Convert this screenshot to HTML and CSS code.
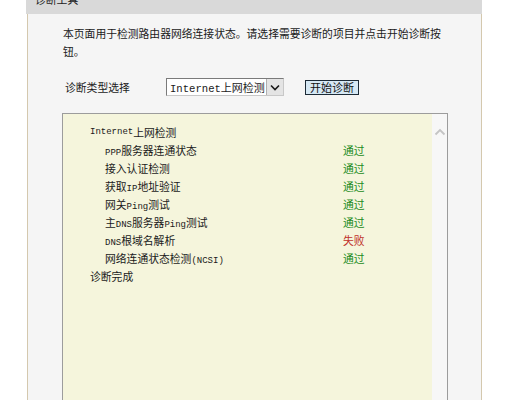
FILE: index.html
```html
<!DOCTYPE html>
<html>
<head>
<meta charset="utf-8">
<link rel="stylesheet" href="styles.css">
</head>
<body>
<div class="panel">
  <div class="header">诊断工具</div>
  <div class="body">
    <p class="desc">本页面用于检测路由器网络连接状态。请选择需要诊断的项目并点击开始诊断按钮。</p>
    <div class="row">
      <span class="label">诊断类型选择</span>
      <div class="select">
        <span class="select-text"><span class="en">Internet</span>上网检测</span>
        <span class="select-btn">
          <svg width="10" height="7" viewBox="0 0 10 7"><path d="M1 1.5 L5 5.5 L9 1.5" fill="none" stroke="#1a1a1a" stroke-width="1.6"/></svg>
        </span>
      </div>
      <span class="button">开始诊断</span>
    </div>
    <div class="textarea">
      <div class="log">
        <div class="line"><span class="en">Internet</span>上网检测</div>
        <div class="line sub"><span class="item"><span class="en">PPP</span>服务器连通状态</span><span class="ok">通过</span></div>
        <div class="line sub"><span class="item">接入认证检测</span><span class="ok">通过</span></div>
        <div class="line sub"><span class="item">获取<span class="en">IP</span>地址验证</span><span class="ok">通过</span></div>
        <div class="line sub"><span class="item">网关<span class="en">Ping</span>测试</span><span class="ok">通过</span></div>
        <div class="line sub"><span class="item">主<span class="en">DNS</span>服务器<span class="en">Ping</span>测试</span><span class="ok">通过</span></div>
        <div class="line sub"><span class="item"><span class="en">DNS</span>根域名解析</span><span class="fail">失败</span></div>
        <div class="line sub"><span class="item">网络连通状态检测<span class="en">(NCSI)</span></span><span class="ok">通过</span></div>
        <div class="line">诊断完成</div>
      </div>
      <div class="scrollbar">
        <svg width="12" height="8" viewBox="0 0 12 8"><path d="M1.5 6.5 L6 2 L10.5 6.5" fill="none" stroke="#c4c4c4" stroke-width="1.8"/></svg>
      </div>
    </div>
  </div>
</div>
</body>
</html>
```
FILE: styles.css
```css
html, body {
  margin: 0;
  padding: 0;
  background: #ffffff;
  overflow: hidden;
}
body {
  font-family: "Noto Sans CJK SC", "Liberation Sans", sans-serif;
  font-size: 10.8px;
  color: #1a1a1a;
}
.panel {
  margin-left: 26px;
  margin-top: -10px;
  width: 456px;
}
.header {
  height: 24px;
  line-height: 18px;
  background: #d9d9d9;
  padding-left: 9px;
  color: #222;
}
.body {
  background: #f5f5f5;
  border-left: 1px solid #d4c8ae;
  border-right: 1px solid #d4c8ae;
  margin-left: 1px;
  padding: 10px 0 0 34px;
  height: 420px;
}
.desc {
  margin: 0 0 0 1px;
  width: 386px;
  line-height: 18px;
}
.row {
  display: flex;
  align-items: center;
  margin-top: 18px;
  height: 18px;
}
.label {
  margin-left: 3px;
  width: 101px;
}
.select {
  width: 116px;
  height: 16px;
  border: 1px solid #7a7a7a;
  border-right-color: #c8c8c8;
  border-bottom-color: #c8c8c8;
  background: #fff;
  display: flex;
  align-items: stretch;
}
.select-text {
  flex: 1;
  padding-left: 3px;
  line-height: 16px;
  font-size: 11px;
}
.select .en {
  font-size: 10.6px;
}
.select-btn {
  width: 16px;
  border-left: 1px solid #b0b0b0;
  background: #e4e4e4;
  display: flex;
  align-items: center;
  justify-content: center;
}
.button {
  margin-left: 21px;
  width: 52px;
  height: 13px;
  line-height: 13px;
  border: 1px solid #1c2a36;
  background: #d6e8f4;
  text-align: center;
  font-size: 11px;
  color: #111;
}
.en {
  font-family: "Liberation Mono", "DejaVu Sans Mono", monospace;
  font-size: 9px;
}
.textarea {
  margin-top: 17px;
  width: 384px;
  height: 320px;
  border: 1px solid #9c9c9c;
  box-shadow: inset 1px 1px 0 #dcdcdc;
  display: flex;
}
.log {
  width: 342px;
  background: #f5f5dc;
  padding: 9px 0 0 27px;
}
.line {
  height: 18px;
  line-height: 18px;
  display: flex;
  white-space: nowrap;
}
.line.sub {
  padding-left: 15px;
}
.item {
  width: 238px;
}
.ok {
  color: #228b22;
}
.fail {
  color: #c0302a;
}
.scrollbar {
  flex: 1;
  background: #f7f7f7;
  display: flex;
  justify-content: center;
  padding-top: 14px;
}
.scrollbar svg {
  display: block;
}
```
